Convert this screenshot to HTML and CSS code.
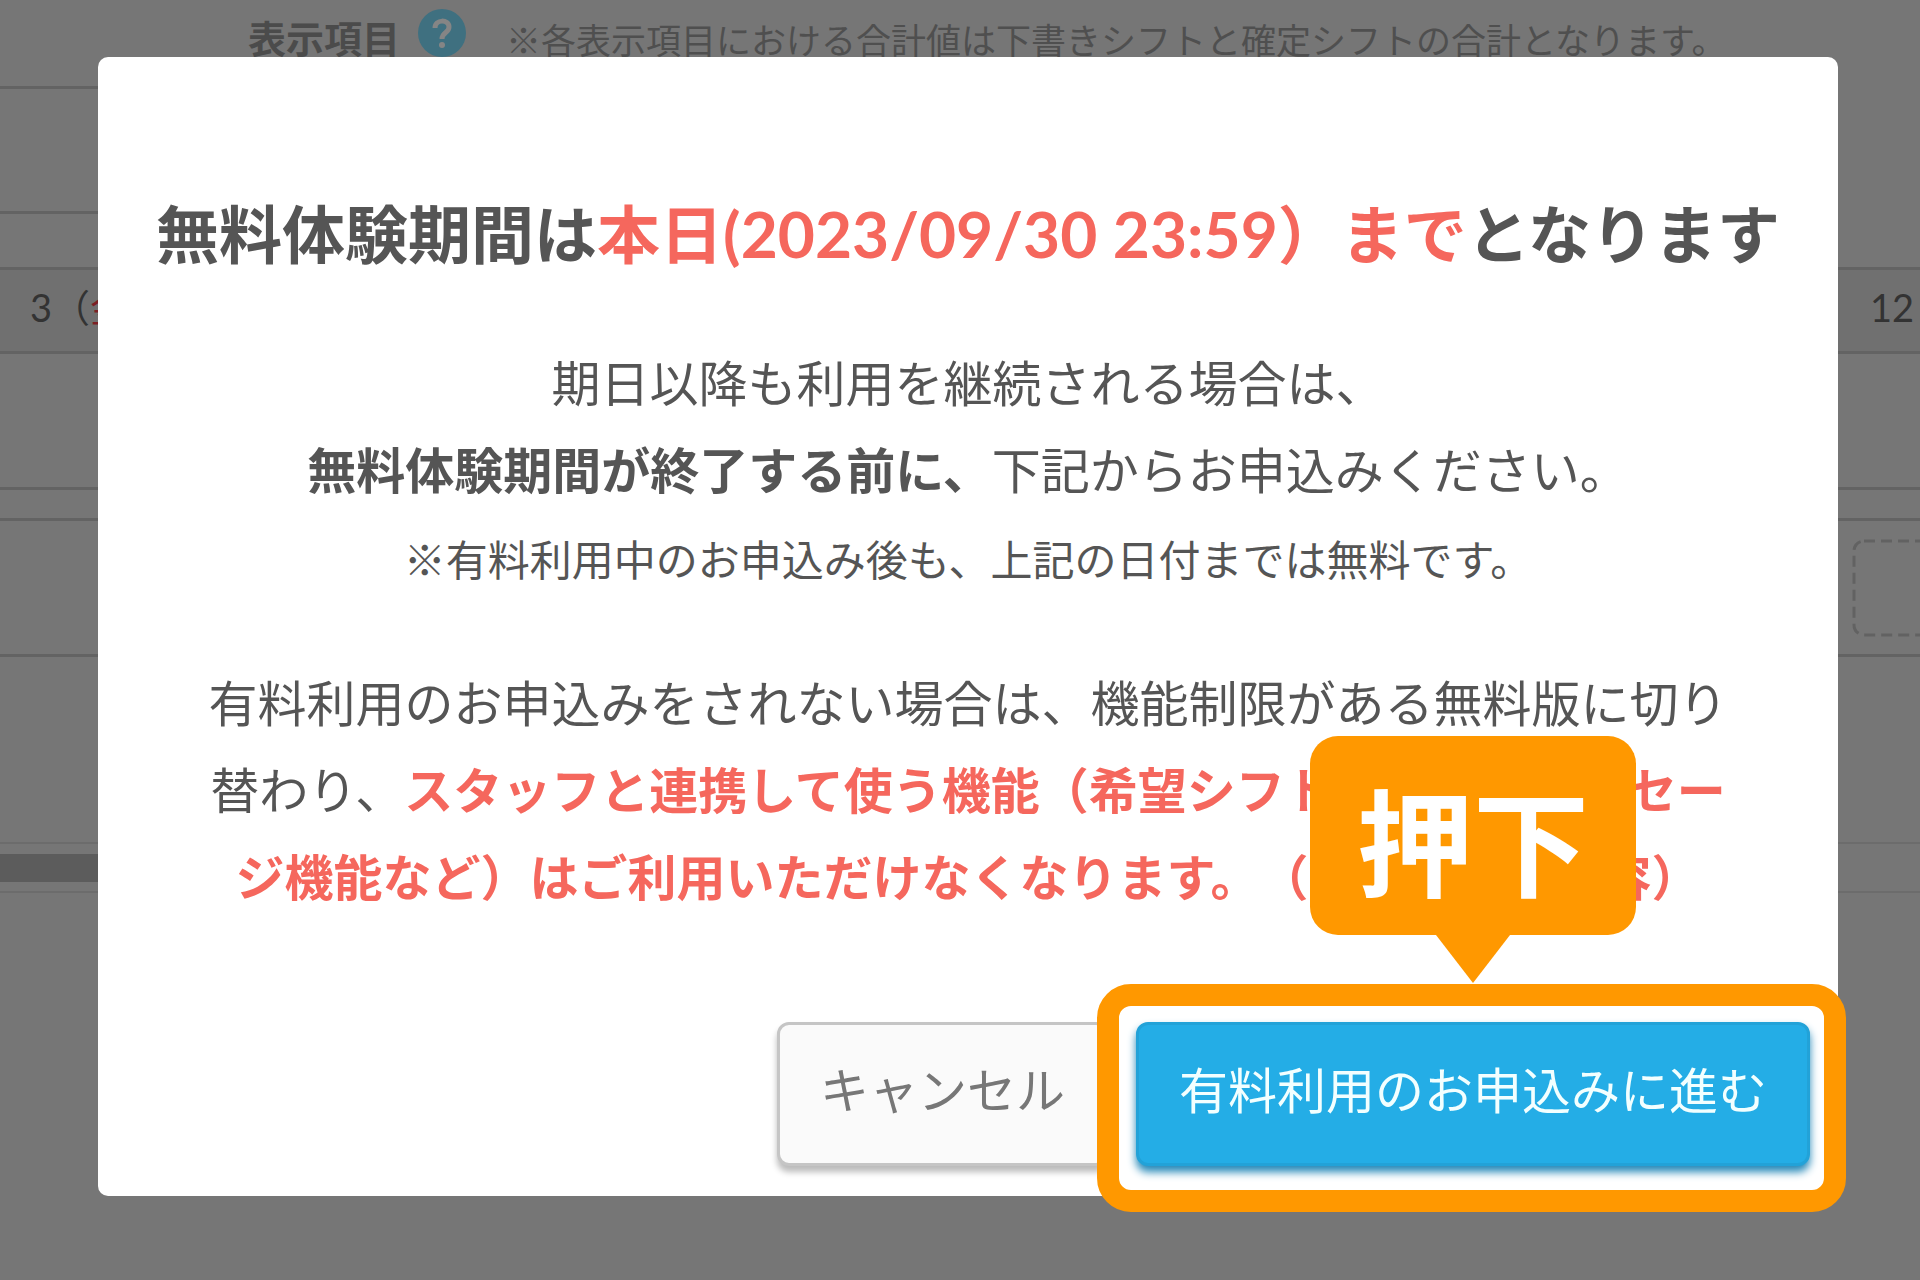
FILE: index.html
```html
<!DOCTYPE html>
<html lang="ja">
<head>
<meta charset="utf-8">
<title>無料体験期間のお知らせ</title>
<link rel="stylesheet" href="styles.css">
</head>
<body>
<div class="page">
  <div class="toolbar">
    <span class="toolbar-label">表示項目</span>
    <svg class="help" viewBox="0 0 48 48" aria-hidden="true">
      <circle cx="24" cy="24" r="24" fill="#3f7080"/>
      <path d="M17 19c0-9 14-9 14-1 0 6-7 5-7 12" fill="none" stroke="#858585" stroke-width="5"/>
      <circle cx="24" cy="36" r="3" fill="#858585"/>
    </svg>
    <span class="toolbar-note">※各表示項目における合計値は下書きシフトと確定シフトの合計となります。</span>
  </div>
  <div class="panel panel-tall"></div>
  <div class="panel panel-short"></div>
  <table class="schedule">
    <thead>
      <tr><th class="day">3（<span class="friday">金</span>）</th><th class="day day-last">12</th></tr>
    </thead>
    <tbody>
      <tr class="row-summary"><td></td><td></td></tr>
      <tr class="row-gap"><td></td><td></td></tr>
      <tr class="row-shift"><td></td><td>
        <svg class="slot" width="120" height="98" aria-hidden="true">
          <rect x="2" y="2" width="160" height="94" rx="10" fill="none" stroke="#626262" stroke-width="3" stroke-dasharray="11 6"/>
        </svg>
      </td></tr>
      <tr class="row-blank"><td></td><td></td></tr>
    </tbody>
  </table>
  <div class="scroll-track"><div class="scroll-thumb"></div></div>
</div>

<div class="overlay">
  <section class="dialog" role="dialog" aria-labelledby="dialog-title">
    <h1 class="title" id="dialog-title">無料体験期間は<span class="alert">本日<span class="date">(2023/09/30 23:59</span>）まで</span>となります</h1>
    <p class="text">期日以降も利用を継続される場合は、<br><strong>無料体験期間が終了する前に、</strong>下記からお申込みください。</p>
    <p class="text note">※有料利用中のお申込み後も、上記の日付までは無料です。</p>
    <p class="text limits">有料利用のお申込みをされない場合は、機能制限がある無料版に切り<br>替わり、<strong class="alert">スタッフと連携して使う機能（希望シフトの提出やメッセー<br>ジ機能など）はご利用いただけなくなります。（詳細は変更内容）</strong></p>
    <div class="actions">
      <button class="button cancel" type="button">キャンセル</button>
      <div class="target">
        <button class="button primary" type="button">有料利用のお申込みに進む</button>
        <div class="highlight"></div>
        <div class="callout">押下</div>
      </div>
    </div>
  </section>
</div>
</body>
</html>
```
FILE: styles.css
```css
* { box-sizing: border-box; }

body {
  margin: 0;
  background: #767676;
  color: #555;
  font-family: Lato, "Noto Sans CJK JP", sans-serif;
  text-spacing-trim: space-all;
  position: relative;
  min-height: 100vh;
  overflow: hidden;
}

/* Dimmed schedule page */
.toolbar {
  display: flex;
  align-items: center;
  height: 86px;
  padding: 0 0 20px 248px;
  white-space: nowrap;
}
.toolbar-label { font-size: 38px; font-weight: 700; color: #4b4b4b; line-height: 48px; padding-top: 10px; }
.help { width: 48px; height: 48px; margin: 0 40px 0 18px; flex: none; }
.toolbar-note { font-size: 35px; line-height: 48px; color: #4f4f4f; padding-top: 14px; }

.panel { width: 50%; border-top: 3px solid #636363; }
.panel-tall { height: 125px; }
.panel-short { height: 56px; }

.schedule {
  width: 100%;
  table-layout: fixed;
  border-collapse: separate;
  border-spacing: 0;
}
.schedule th, .schedule td { padding: 0; border-top: 3px solid #636363; overflow: hidden; }
.day {
  height: 84px;
  background: #707070;
  color: #333;
  font-size: 38px;
  font-weight: 400;
  line-height: 48px;
  text-align: left;
}
.schedule .day { padding: 0 0 8px 30px; }
.day-last { width: 80px; }
.friday { color: #7c1f24; }
.row-summary td { height: 136px; }
.row-gap td { height: 31px; }
.row-shift td { height: 136px; }
.row-blank td { height: 188px; }
.slot { display: block; margin-left: 12px; }
.scroll-track {
  height: 51px;
  padding-top: 10px;
  border: solid #6c6c6c;
  border-width: 2px 0;
}
.scroll-thumb { width: 50%; height: 28px; background: #5c5c5c; }

/* Dialog */
.overlay { position: absolute; top: 0; left: 0; width: 100%; padding: 57px 82px 0 98px; }
.dialog {
  padding: 133px 28px 30px;
  border-radius: 10px;
  background: #fff;
  text-align: center;
  white-space: nowrap;
}
.title { margin: 0; font-size: 63px; line-height: 87px; font-weight: 700; }
.date { font-size: 64px; line-height: 87px; }
.alert { color: #f5675d; }
.text { margin: 0; font-size: 49px; line-height: 87px; }
.title + .text { margin-top: 63px; }
.text.note { margin-top: 3px; font-size: 42px; }
.text.limits { margin-top: 56px; }

.actions { display: flex; justify-content: flex-end; gap: 28px; margin-top: 101px; }
.button {
  height: 144px;
  padding: 0 40px 8px;
  border: 3px solid #c5c5c5;
  border-radius: 12px;
  font-family: inherit;
  font-size: 49px;
  line-height: 72px;
}
.cancel { background: #fafafa; color: #777; box-shadow: 0 6px 6px #bbb; }
.primary {
  display: block;
  background: #24ade6;
  border-color: #22a2d8;
  color: #f2ffff;
  box-shadow: 0 6px 8px #2488b8;
}
.target { position: relative; }
.highlight {
  position: absolute;
  inset: -38px -36px -46px -39px;
  border: 22px solid #ff9800;
  border-radius: 34px;
  pointer-events: none;
}
.callout {
  position: absolute;
  left: 50%;
  bottom: 231px;
  width: 326px;
  height: 199px;
  padding-top: 12px;
  border-radius: 28px;
  background: #ff9800;
  color: #fff;
  font-size: 116px;
  font-weight: 700;
  line-height: 191px;
  transform: translateX(-50%);
}
.callout::after {
  content: "";
  position: absolute;
  top: 100%;
  left: 50%;
  border: solid transparent;
  border-width: 48px 37px 0;
  border-top-color: #ff9800;
  transform: translateX(-50%);
}
```
